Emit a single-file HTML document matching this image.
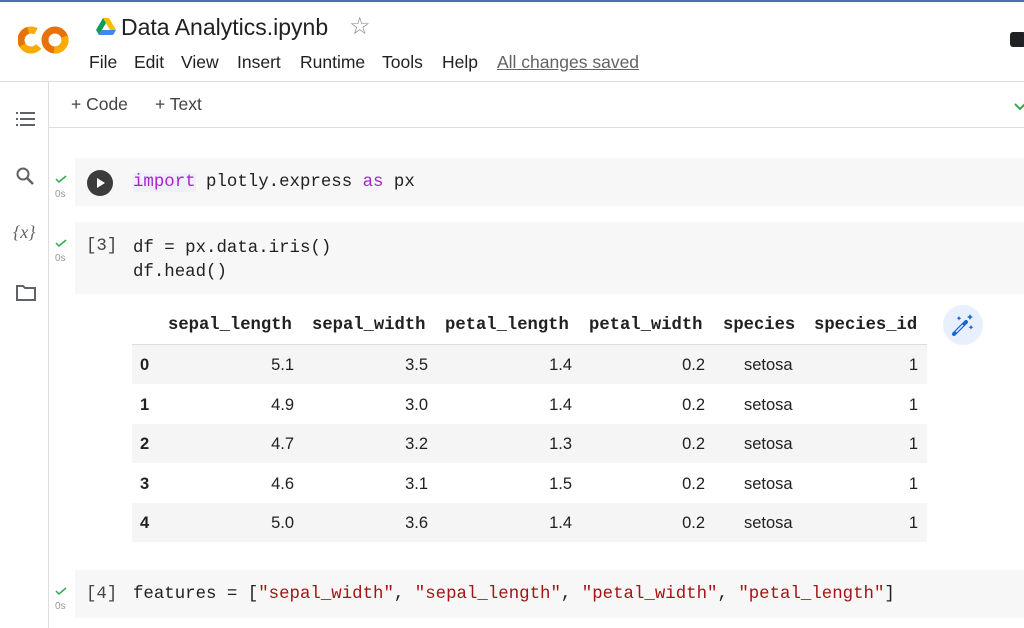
<!DOCTYPE html>
<html><head><meta charset="utf-8"><style>
*{margin:0;padding:0;box-sizing:border-box}
body{width:1024px;height:628px;overflow:hidden;background:#fff;font-family:"Liberation Sans",sans-serif;color:#202124;position:relative}
.a{position:absolute;white-space:nowrap}
.mono{font-family:"Liberation Mono",monospace;font-size:17.4px;color:#202124}
.cell{position:absolute;left:75px;right:0;background:#f7f7f7}
.row{position:absolute;left:132px;width:795px;height:39px}
.g{background:#f5f5f5}
.h{position:absolute;font-family:"Liberation Mono",monospace;font-weight:bold;font-size:17.2px;top:316px}
.chk{position:absolute;left:55px;width:14px;height:8px}
.os{position:absolute;left:55px;font-size:10px;color:#999}
</style></head><body>
<div class="a" style="left:0;top:0;width:1024px;height:2px;background:#4a6fb5"></div>
<svg class="a" style="left:18px;top:24px" width="52" height="32" viewBox="0 0 52 32">
<circle cx="13" cy="16" r="10" fill="none" stroke="#f9ab00" stroke-width="7" stroke-dasharray="45 20" transform="rotate(40 13 16)"/>
<circle cx="13" cy="16" r="10" fill="none" stroke="#e8710a" stroke-width="7" stroke-dasharray="18 50" transform="rotate(150 13 16)"/>
<circle cx="37" cy="16" r="10" fill="none" stroke="#e8710a" stroke-width="7"/>
<circle cx="37" cy="16" r="10" fill="none" stroke="#f9ab00" stroke-width="7" stroke-dasharray="20 50" transform="rotate(-20 37 16)"/>
</svg>
<svg class="a" style="left:96px;top:18px" width="20" height="17" viewBox="0 0 20 17">
<path d="M7 0h6l7 12h-6z" fill="#fbbc04"/><path d="M7 0L0 12l3 5 7-12z" fill="#0f9d58"/><path d="M3 17h14l3-5H6z" fill="#4285f4"/></svg>
<div class="a" style="left:121px;top:14px;font-size:23px;color:#202124">Data Analytics.ipynb</div>
<div class="a" style="left:349px;top:12px;font-size:24px;color:#888">☆</div>
<div class="a" style="left:89px;top:52px;font-size:17.5px">File</div>
<div class="a" style="left:134px;top:52px;font-size:17.5px">Edit</div>
<div class="a" style="left:181px;top:52px;font-size:17.5px">View</div>
<div class="a" style="left:237px;top:52px;font-size:17.5px">Insert</div>
<div class="a" style="left:300px;top:52px;font-size:17.5px">Runtime</div>
<div class="a" style="left:382px;top:52px;font-size:17.5px">Tools</div>
<div class="a" style="left:442px;top:52px;font-size:17.5px">Help</div>
<div class="a" style="left:497px;top:52px;font-size:17.5px;color:#5f6368;text-decoration:underline">All changes saved</div>
<div class="a" style="left:1010px;top:32px;width:16px;height:15px;background:#202124;border-radius:3px"></div>
<div class="a" style="left:0;top:81px;width:1024px;height:1px;background:#ddd"></div>
<div class="a" style="left:48px;top:82px;width:1px;height:546px;background:#ddd"></div>
<div class="a" style="left:48px;top:127px;width:976px;height:1px;background:#ddd"></div>
<div class="a" style="left:71px;top:94px;font-size:17.5px;color:#444">+ Code</div>
<div class="a" style="left:155px;top:94px;font-size:17.5px;color:#444">+ Text</div>
<svg class="a" style="left:1014px;top:103px" width="12" height="8"><path d="M1 1l5 5 5-5" stroke="#34a853" stroke-width="2" fill="none"/></svg>
<svg class="a" style="left:16px;top:111px" width="20" height="16"><g fill="#5f6368"><rect x="0" y="1" width="2" height="2"/><rect x="4" y="1" width="15" height="2"/><rect x="0" y="7" width="2" height="2"/><rect x="4" y="7" width="15" height="2"/><rect x="0" y="13" width="2" height="2"/><rect x="4" y="13" width="15" height="2"/></g></svg>
<svg class="a" style="left:16px;top:167px" width="20" height="20"><circle cx="7" cy="7" r="5.5" stroke="#5f6368" stroke-width="2" fill="none"/><path d="M11 11l6 6" stroke="#5f6368" stroke-width="2.5"/></svg>
<div class="a" style="left:13px;top:222px;font-size:18px;color:#5f6368;font-family:'Liberation Serif',serif;font-style:italic">{<i>x</i>}</div>
<svg class="a" style="left:16px;top:284px" width="20" height="17"><path d="M1 2h6l2 2h10v12H1z" stroke="#5f6368" stroke-width="2" fill="none"/></svg>
<div class="cell" style="top:158px;height:48px"></div>
<svg class="chk" style="top:175px" viewBox="0 0 14 8"><path d="M1 4l3 3 7-6" stroke="#34a853" stroke-width="1.5" fill="none"/></svg>
<div class="os" style="top:189px">0s</div>
<div class="a" style="left:87px;top:170px;width:26px;height:26px;border-radius:50%;background:#3c3c3c"></div>
<svg class="a" style="left:96px;top:177px" width="10" height="12"><path d="M1 1l8 5-8 5z" fill="#fff"/></svg>
<div class="a mono" style="left:133px;top:173px"><span style="color:#a626c9;background:#eef1f8">import</span> plotly.express <span style="color:#a626c9">as</span> px</div>
<div class="cell" style="top:222px;height:72px"></div>
<svg class="chk" style="top:239px" viewBox="0 0 14 8"><path d="M1 4l3 3 7-6" stroke="#34a853" stroke-width="1.5" fill="none"/></svg>
<div class="os" style="top:253px">0s</div>
<div class="a mono" style="left:86px;top:237px;color:#444">[3]</div>
<div class="a mono" style="left:133px;top:237px;line-height:24px">df = px.data.iris()<br>df.head()</div>
<div class="h" style="left:168px">sepal_length</div>
<div class="h" style="left:312px">sepal_width</div>
<div class="h" style="left:445px">petal_length</div>
<div class="h" style="left:589px">petal_width</div>
<div class="h" style="left:723px">species</div>
<div class="h" style="left:814px">species_id</div>
<div class="a" style="left:132px;top:344px;width:795px;height:1px;background:#ddd"></div>
<div class="a" style="left:943px;top:305px;width:40px;height:40px;border-radius:50%;background:#e8f0fe"></div>
<svg class="a" style="left:950px;top:312px" width="26" height="26" viewBox="0 0 26 26"><path d="M4 22L16 10" stroke="#1a66d2" stroke-width="4" stroke-linecap="round"/><path d="M6 20l7-7" stroke="#e8f0fe" stroke-width="1.5"/><path d="M20 2l1 2 2 1-2 1-1 2-1-2-2-1 2-1zM9 4l.8 1.5 1.5.8-1.5.8L9 8.5l-.8-1.5-1.5-.8 1.5-.8zM21 13l.8 1.5 1.5.8-1.5.8-.8 1.5-.8-1.5-1.5-.8 1.5-.8z" fill="#1a66d2"/></svg>
<div class="row g" style="top:345px"></div>
<div class="row g" style="top:424px"></div>
<div class="row g" style="top:503px"></div>
<div id="rows"></div>
<script>
var d=[["0","5.1","3.5","1.4","0.2"],["1","4.9","3.0","1.4","0.2"],["2","4.7","3.2","1.3","0.2"],["3","4.6","3.1","1.5","0.2"],["4","5.0","3.6","1.4","0.2"]];
var ends=[294,428,572,705];var h="";
d.forEach(function(r,i){var t=345+i*39.5+11;
h+='<div class="a" style="left:140px;top:'+t+'px;font-weight:bold;font-size:16.5px">'+r[0]+'</div>';
for(var j=1;j<5;j++)h+='<div class="a" style="right:'+(1024-ends[j-1])+'px;top:'+t+'px;font-size:16.5px">'+r[j]+'</div>';
h+='<div class="a" style="left:744px;top:'+t+'px;font-size:16.5px">setosa</div>';
h+='<div class="a" style="right:106px;top:'+t+'px;font-size:16.5px">1</div>';});
document.getElementById("rows").innerHTML=h;
</script>
<div class="cell" style="top:570px;height:48px"></div>
<svg class="chk" style="top:587px" viewBox="0 0 14 8"><path d="M1 4l3 3 7-6" stroke="#34a853" stroke-width="1.5" fill="none"/></svg>
<div class="os" style="top:601px">0s</div>
<div class="a mono" style="left:86px;top:585px;color:#444">[4]</div>
<div class="a mono" style="left:133px;top:585px">features = [<span style="color:#a31515">"sepal_width"</span>, <span style="color:#a31515">"sepal_length"</span>, <span style="color:#a31515">"petal_width"</span>, <span style="color:#a31515">"petal_length"</span>]</div>
</body></html>
